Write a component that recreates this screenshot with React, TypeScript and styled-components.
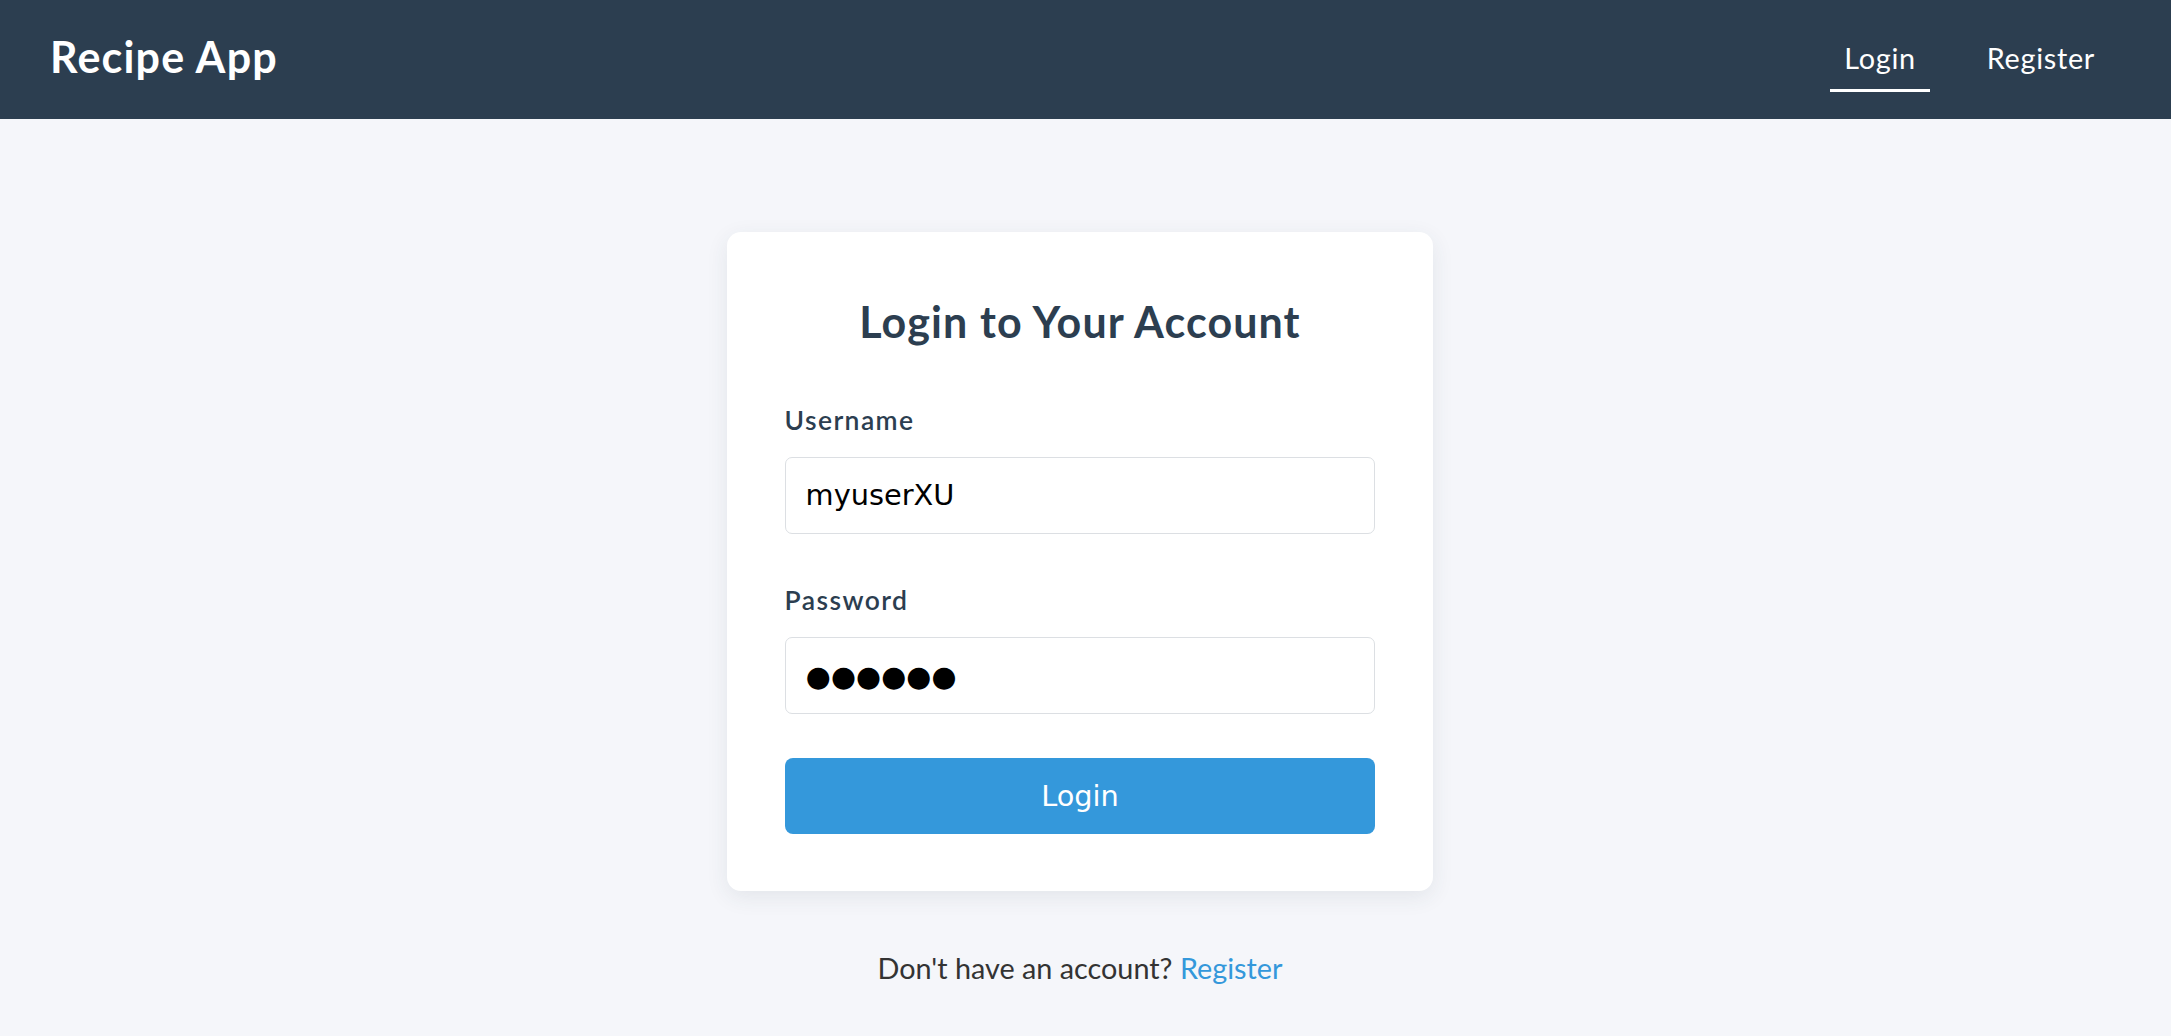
import React from "react";
import styled, { createGlobalStyle } from "styled-components";

const GlobalStyle = createGlobalStyle`
  html, body {
    margin: 0;
    padding: 0;
    background: #f5f6fa;
    font-family: Lato, "Open Sans", sans-serif;
  }
  * { box-sizing: border-box; }
`;

const Page = styled.div`
  min-height: 100vh;
  background: #f5f6fa;
`;

const Header = styled.header`
  height: 119px;
  background: #2c3e50;
  display: flex;
  align-items: center;
  justify-content: space-between;
  padding: 0 62px 0 50px;
`;

const Brand = styled.div`
  color: #ffffff;
  font-size: 43px;
  font-weight: 700;
  letter-spacing: 1.2px;
  line-height: 1.2;
  margin-bottom: 6px;
`;

const Nav = styled.nav`
  display: flex;
  gap: 43px;
`;

const NavLink = styled.a<{ $active?: boolean }>`
  color: #ffffff;
  font-size: 28.8px;
  letter-spacing: 0.7px;
  line-height: 1.2;
  padding: 14px;
  text-decoration: none;
  border-bottom: 3px solid ${(p) => (p.$active ? "#ffffff" : "transparent")};
`;

const Main = styled.main`
  display: flex;
  flex-direction: column;
  align-items: center;
  padding: 113px 11px 0 0;
`;

const Card = styled.div`
  width: 706px;
  background: #ffffff;
  border-radius: 14px;
  padding: 64px 57.6px 57px;
  box-shadow: 0 6px 22px rgba(44, 62, 80, 0.09);
`;

const Title = styled.h2`
  margin: 0 0 57px;
  text-align: center;
  color: #2c3e50;
  font-size: 43px;
  font-weight: 700;
  letter-spacing: 1.1px;
  line-height: 51.84px;
`;

const Field = styled.div<{ $last?: boolean }>`
  display: flex;
  flex-direction: column;
  margin-bottom: ${(p) => (p.$last ? "44px" : "51px")};
`;

const Label = styled.label`
  color: #2c3e50;
  font-size: 26.5px;
  font-weight: 600;
  letter-spacing: 1.4px;
  line-height: 31.1px;
  margin-bottom: 21px;
`;

const Input = styled.input`
  height: 77px;
  width: 100%;
  border: 1.8px solid #dcdfe3;
  border-radius: 7px;
  padding: 0 20px;
  font-family: "DejaVu Sans", sans-serif;
  font-size: 28.8px;
  color: #000000;
  background: #ffffff;
  outline: none;
`;

const Button = styled.button`
  display: block;
  width: 100%;
  height: 76px;
  border: none;
  border-radius: 8px;
  background: #3498db;
  color: #ffffff;
  font-family: "DejaVu Sans", sans-serif;
  font-size: 28.8px;
  cursor: pointer;
`;

const Footer = styled.p`
  margin: 60px 0 0;
  color: #333333;
  font-size: 28.8px;
  line-height: 1.2;
  text-align: center;
`;

const FooterLink = styled.a`
  color: #3498db;
  text-decoration: none;
`;

export default function App() {
  return (
    <Page>
      <GlobalStyle />
      <Header>
        <Brand>Recipe App</Brand>
        <Nav>
          <NavLink $active href="#">Login</NavLink>
          <NavLink href="#">Register</NavLink>
        </Nav>
      </Header>
      <Main>
        <Card>
          <Title>Login to Your Account</Title>
          <Field>
            <Label htmlFor="username">Username</Label>
            <Input id="username" type="text" defaultValue="myuserXU" />
          </Field>
          <Field $last>
            <Label htmlFor="password">Password</Label>
            <Input id="password" type="text" readOnly aria-label="Password (hidden)" defaultValue={"\u25CF\u25CF\u25CF\u25CF\u25CF\u25CF"} />
          </Field>
          <Button type="button">Login</Button>
        </Card>
        <Footer>
          Don't have an account? <FooterLink href="#">Register</FooterLink>
        </Footer>
      </Main>
    </Page>
  );
}
